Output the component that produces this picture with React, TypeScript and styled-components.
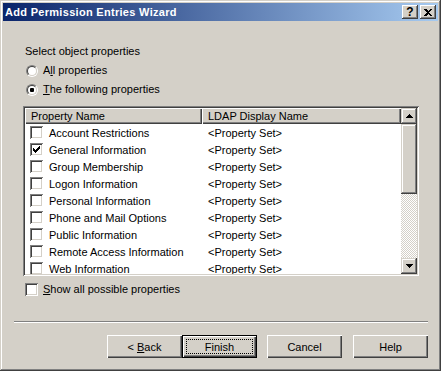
import * as React from "react";
import styled, { createGlobalStyle } from "styled-components";

const GlobalStyle = createGlobalStyle`
  html, body {
    margin: 0;
    padding: 0;
    background: #d4d0c8;
  }
  body {
    font-family: "Liberation Sans", Arial, sans-serif;
    font-size: 11px;
    color: #000;
  }
`;

const raised = "inset -1px -1px #404040, inset 1px 1px #d4d0c8, inset -2px -2px #808080, inset 2px 2px #ffffff";
const sunken = "inset 1px 1px #808080, inset -1px -1px #ffffff, inset 2px 2px #404040, inset -2px -2px #d4d0c8";

const Window = styled.div`
  width: 441px;
  height: 371px;
  box-sizing: border-box;
  padding: 3px;
  background: #d4d0c8;
  box-shadow: ${raised};
  display: flex;
  flex-direction: column;
`;

const TitleBar = styled.div`
  height: 18px;
  display: flex;
  align-items: center;
  padding: 0 2px;
  background: linear-gradient(to right, #0a246a, #a6caf0);
`;

const Title = styled.div`
  flex: 1;
  color: #fff;
  font-weight: bold;
  font-size: 11px;
  letter-spacing: 0.3px;
  line-height: 18px;
  white-space: nowrap;
`;

const CapButtons = styled.div`
  display: flex;
  gap: 2px;
`;

const CapButton = styled.div`
  width: 16px;
  height: 14px;
  box-sizing: border-box;
  background: #d4d0c8;
  box-shadow: inset -1px -1px #404040, inset 1px 1px #ffffff, inset -2px -2px #808080;
  display: flex;
  align-items: center;
  justify-content: center;
  font-weight: bold;
  font-size: 12px;
  line-height: 12px;
`;

const Body = styled.div`
  flex: 1;
  display: flex;
  flex-direction: column;
`;

const Group = styled.div`
  display: flex;
  flex-direction: column;
  padding: 24px 0 0 20px;
`;

const Label = styled.div`
  height: 13px;
  line-height: 13px;
  padding-left: 2px;
  white-space: nowrap;
`;

const RadioList = styled.div`
  display: flex;
  flex-direction: column;
  gap: 6px;
  margin-top: 6px;
  padding-left: 3px;
`;

const OptionRow = styled.div`
  display: flex;
  align-items: center;
  gap: 5px;
  height: 13px;
  line-height: 13px;
  white-space: nowrap;
`;

const RadioOuter = styled.span`
  width: 12px;
  height: 12px;
  box-sizing: border-box;
  border-radius: 50%;
  border: 1px solid;
  border-color: #808080 #ffffff #ffffff #808080;
  display: flex;
`;

const RadioInner = styled.span`
  flex: 1;
  border-radius: 50%;
  border: 1px solid;
  border-color: #404040 #d4d0c8 #d4d0c8 #404040;
  background: #fff;
  display: flex;
  align-items: center;
  justify-content: center;
`;

const Dot = styled.span`
  width: 4px;
  height: 4px;
  border-radius: 1px;
  background: #000;
`;

const Accel = styled.span`
  text-decoration: underline;
`;

const ListView = styled.div`
  margin-top: 10px;
  width: 396px;
  height: 170px;
  box-sizing: border-box;
  padding: 2px;
  background: #fff;
  box-shadow: ${sunken};
  display: flex;
`;

const ListMain = styled.div`
  flex: 1;
  overflow: hidden;
  display: flex;
  flex-direction: column;
`;

const Header = styled.div`
  display: flex;
  height: 16px;
  flex-shrink: 0;
`;

const HeaderCell = styled.div<{ $w: number }>`
  width: ${(p) => p.$w}px;
  flex-shrink: 0;
  box-sizing: border-box;
  padding-left: 6px;
  line-height: 16px;
  background: #d4d0c8;
  box-shadow: inset 1px 1px #ffffff, inset -1px -1px #404040, inset -2px -2px #808080;
  white-space: nowrap;
`;

const Row = styled.div`
  display: flex;
  align-items: center;
  height: 17px;
  flex-shrink: 0;
  white-space: nowrap;
`;

const NameCell = styled.div`
  width: 177px;
  flex-shrink: 0;
  display: flex;
  align-items: center;
  padding-left: 5px;
  box-sizing: border-box;
  gap: 6px;
`;

const ValueCell = styled.div`
  padding-left: 6px;
`;

const CheckBox = styled.span`
  width: 13px;
  height: 13px;
  box-sizing: border-box;
  flex-shrink: 0;
  background: #fff;
  box-shadow: ${sunken};
  display: flex;
  align-items: center;
  justify-content: center;
`;

const ScrollBar = styled.div`
  width: 16px;
  flex-shrink: 0;
  display: flex;
  flex-direction: column;
  background: repeating-conic-gradient(#d4d0c8 0% 25%, #ffffff 0% 50%) 0 0 / 2px 2px;
`;

const ScrollButton = styled.div<{ $h?: number }>`
  width: 16px;
  height: ${(p) => p.$h ?? 16}px;
  flex-shrink: 0;
  background: #d4d0c8;
  box-shadow: ${raised};
  display: flex;
  align-items: center;
  justify-content: center;
`;

const Track = styled.div`
  flex: 1;
`;

const ShowRow = styled(OptionRow)`
  margin-top: 7px;
  padding-left: 2px;
`;

const Separator = styled.div`
  margin: 25px 10px 0 11px;
  height: 0;
  border-top: 1px solid #808080;
  border-bottom: 1px solid #ffffff;
`;

const ButtonRow = styled.div`
  margin-top: 12px;
  padding-right: 10px;
  display: flex;
  justify-content: flex-end;
`;

const Button = styled.button<{ $default?: boolean; $gap?: number }>`
  width: 75px;
  height: 23px;
  margin: 0 0 0 ${(p) => p.$gap ?? 0}px;
  padding: 0;
  border: none;
  position: relative;
  background: #d4d0c8;
  color: #000;
  font: 11px "Liberation Sans", Arial, sans-serif;
  box-shadow: ${(p) =>
    p.$default
      ? "inset 1px 1px #000, inset -1px -1px #000, inset 2px 2px #ffffff, inset -2px -2px #404040, inset -3px -3px #808080"
      : "inset 1px 1px #ffffff, inset -1px -1px #404040, inset -2px -2px #808080"};
  &::after {
    content: "";
    display: ${(p) => (p.$default ? "block" : "none")};
    position: absolute;
    inset: 4px;
    border: 1px dotted #000;
  }
`;

const CheckMark = () => (
  <svg width="7" height="7" viewBox="0 0 7 7" shapeRendering="crispEdges">
    {[2, 3, 4, 3, 2, 1, 0].map((y, x) => (
      <rect key={x} x={x} y={y} width="1" height="3" fill="#000" />
    ))}
  </svg>
);

const Arrow = ({ down }: { down?: boolean }) => (
  <svg width="7" height="4" viewBox="0 0 7 4" shapeRendering="crispEdges">
    <polygon points={down ? "0,0 7,0 3.5,4" : "3.5,0 7,4 0,4"} fill="#000" />
  </svg>
);

const CloseGlyph = () => (
  <svg width="8" height="7" viewBox="0 0 8 7" shapeRendering="crispEdges">
    <path d="M0 0h2l2 2 2-2h2L5 3.5 8 7H6L4 5 2 7H0l3-3.5z" fill="#000" />
  </svg>
);

const Radio = ({ checked }: { checked?: boolean }) => (
  <RadioOuter>
    <RadioInner>{checked && <Dot />}</RadioInner>
  </RadioOuter>
);

const rows: [string, boolean][] = [
  ["Account Restrictions", false],
  ["General Information", true],
  ["Group Membership", false],
  ["Logon Information", false],
  ["Personal Information", false],
  ["Phone and Mail Options", false],
  ["Public Information", false],
  ["Remote Access Information", false],
  ["Web Information", false],
];

export default function App() {
  return (
    <>
      <GlobalStyle />
      <Window>
        <TitleBar>
          <Title>Add Permission Entries Wizard</Title>
          <CapButtons>
            <CapButton>?</CapButton>
            <CapButton>
              <CloseGlyph />
            </CapButton>
          </CapButtons>
        </TitleBar>
        <Body>
          <Group>
            <Label>Select object properties</Label>
            <RadioList>
              <OptionRow>
                <Radio />
                <span>
                  A<Accel>l</Accel>l properties
                </span>
              </OptionRow>
              <OptionRow>
                <Radio checked />
                <span>
                  <Accel>T</Accel>he following properties
                </span>
              </OptionRow>
            </RadioList>
            <ListView>
              <ListMain>
                <Header>
                  <HeaderCell $w={177}>Property Name</HeaderCell>
                  <HeaderCell $w={199}>LDAP Display Name</HeaderCell>
                </Header>
                {rows.map(([name, checked]) => (
                  <Row key={name}>
                    <NameCell>
                      <CheckBox>{checked && <CheckMark />}</CheckBox>
                      <span>{name}</span>
                    </NameCell>
                    <ValueCell>&lt;Property Set&gt;</ValueCell>
                  </Row>
                ))}
              </ListMain>
              <ScrollBar>
                <ScrollButton>
                  <Arrow />
                </ScrollButton>
                <ScrollButton $h={70} />
                <Track />
                <ScrollButton>
                  <Arrow down />
                </ScrollButton>
              </ScrollBar>
            </ListView>
            <ShowRow>
              <CheckBox />
              <span>
                <Accel>S</Accel>how all possible properties
              </span>
            </ShowRow>
          </Group>
          <Separator />
          <ButtonRow>
            <Button>
              &lt; <Accel>B</Accel>ack
            </Button>
            <Button $default>Finish</Button>
            <Button $gap={10}>Cancel</Button>
            <Button $gap={11}>Help</Button>
          </ButtonRow>
        </Body>
      </Window>
    </>
  );
}
